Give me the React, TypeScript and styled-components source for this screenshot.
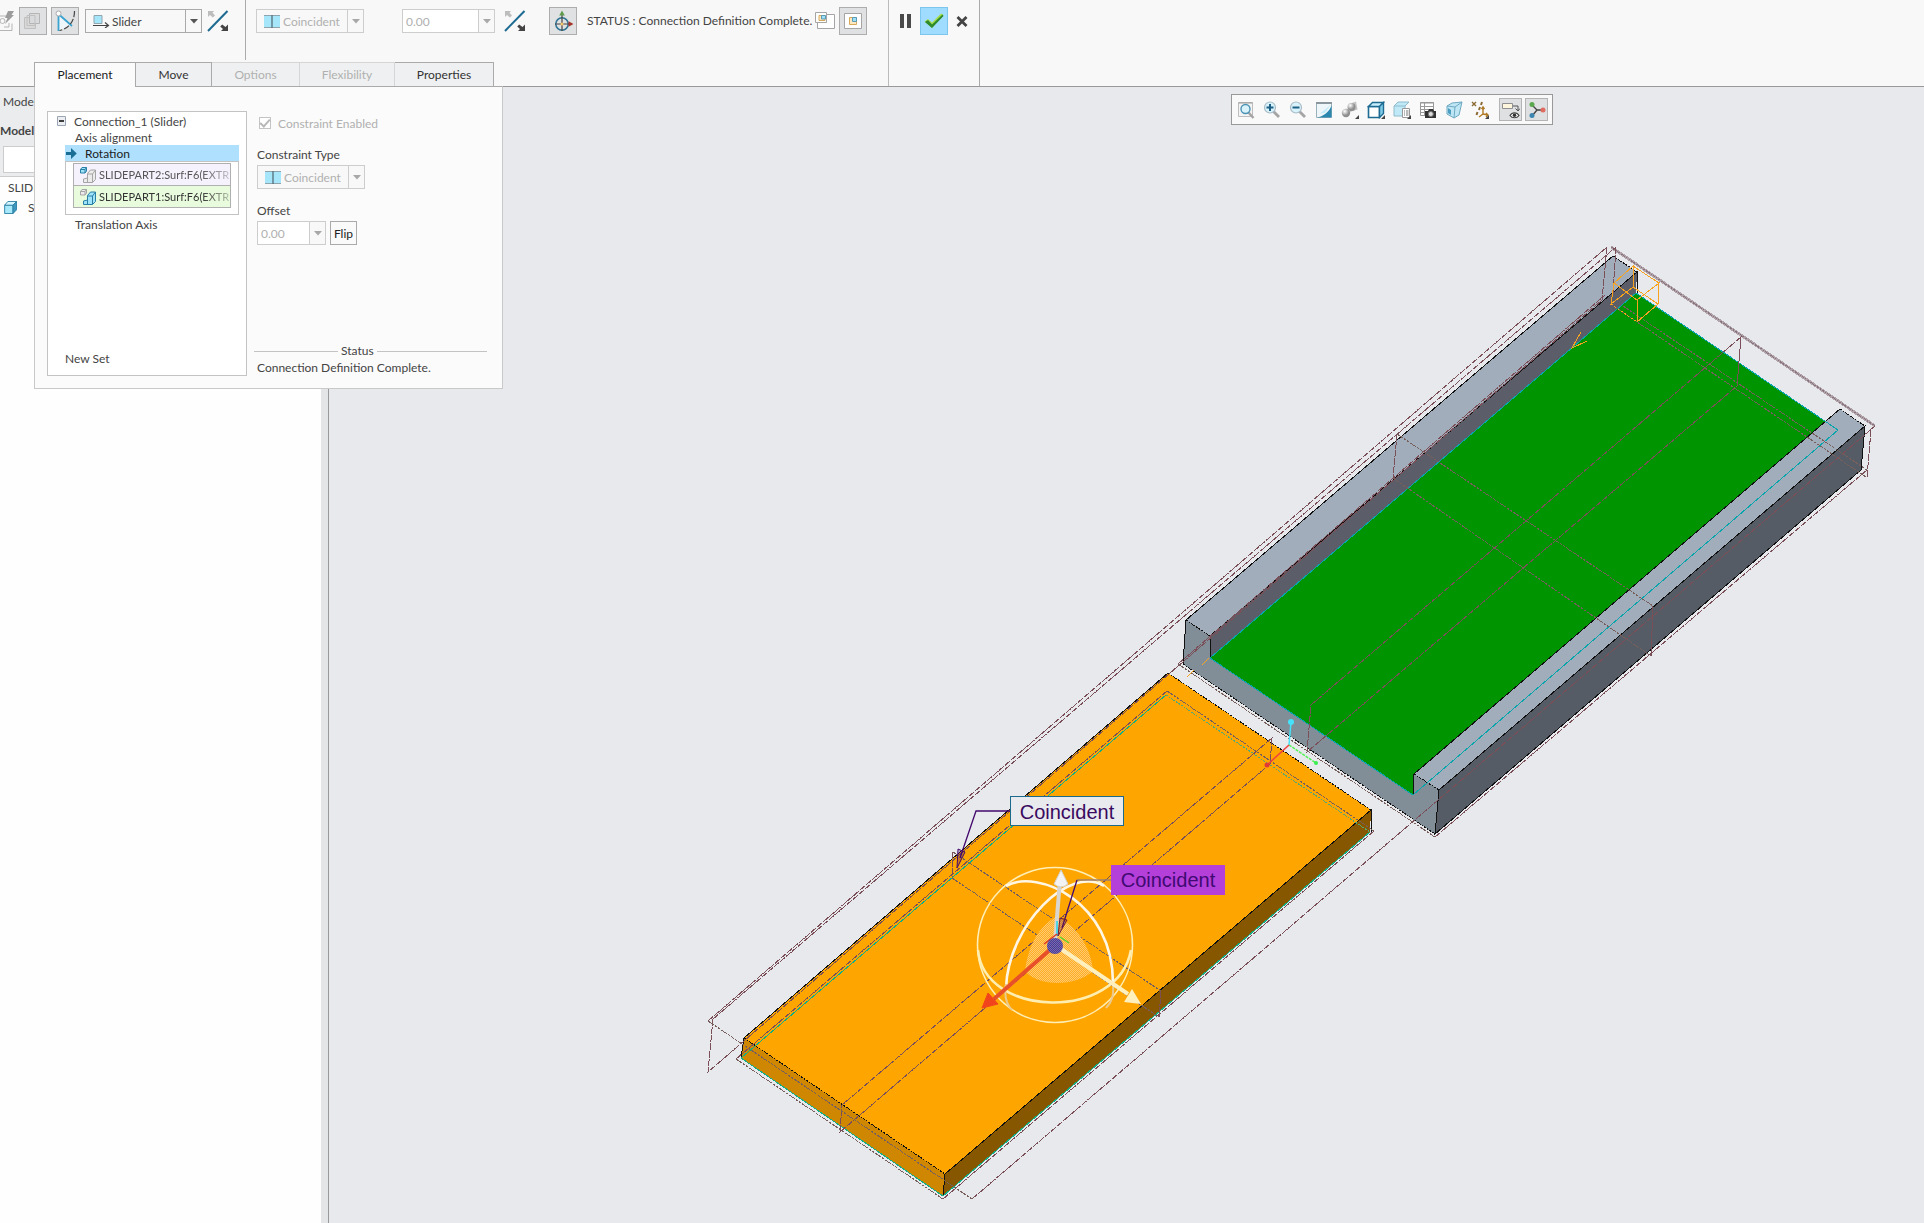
import React from "react";
import styled, { createGlobalStyle, css } from "styled-components";

const GlobalStyle = createGlobalStyle`
  * { box-sizing: border-box; }
  body { margin: 0; }
  body, button, input, select {
    font-family: Lato, "Noto Sans", sans-serif;
    font-size: 12px;
    color: #444;
  }
  button { padding: 0; cursor: pointer; }
  svg { display: block; flex: none; }
`;

/* ---------- page frame ---------- */

const Page = styled.div`
  display: flex;
  flex-direction: column;
  min-height: 100vh;
`;

const Ribbon = styled.header`
  position: relative;
  z-index: 2;
  display: flex;
  height: 87px;
  background: #f8f8f8;
  border-bottom: 1px solid #999;
`;

const Dashboard = styled.div`
  position: relative;
  display: flex;
  flex-direction: column;
  justify-content: space-between;
  width: 889px;
  border-right: 1px solid #bbb;
`;

const Controls = styled.div`
  display: flex;
  height: 60px;
`;

const ControlGroup = styled.div<{ $width?: number }>`
  display: flex;
  align-items: flex-start;
  padding-top: 7px;
  width: ${(p) => (p.$width ? `${p.$width}px` : "auto")};
  border-right: ${(p) => (p.$width ? "1px solid #aaa" : "none")};
`;

const Gap = styled.div<{ $size: number }>`
  flex: none;
  width: ${(p) => p.$size}px;
`;

const Body = styled.div`
  display: flex;
  flex: 1;
`;

/* ---------- controls ---------- */

const IconButton = styled.button<{ $on?: boolean }>`
  display: flex;
  align-items: center;
  justify-content: center;
  flex: none;
  width: 28px;
  height: 28px;
  background: ${(p) => (p.$on ? "#e0e1e2" : "transparent")};
  border: 1px solid ${(p) => (p.$on ? "#adadad" : "transparent")};
`;

const AcceptButton = styled(IconButton)`
  background: #9fdcff;
  border-color: #7cc6ee;
`;

const PlainButton = styled.button`
  display: flex;
  align-items: center;
  justify-content: center;
  height: 28px;
  border: 0;
  background: none;
`;

const ComboFrame = styled.label<{ $width: number; $dim?: boolean; $field?: boolean }>`
  display: grid;
  grid-template-columns: 1fr 16px;
  align-items: center;
  width: ${(p) => p.$width}px;
  height: 24px;
  background: ${(p) => (p.$field ? "#fff" : "#f8f8f8")};
  border: 1px solid ${(p) => (p.$dim ? "#cdcdcd" : "#aaa")};
`;

const comboText = css<{ $inset: number }>`
  grid-row: 1;
  width: 100%;
  height: 22px;
  padding: 0 0 0 ${(p) => p.$inset}px;
  border: 0;
  margin: 0;
  background: transparent;
  appearance: none;
  &:disabled { color: #b0b0b0; opacity: 1; }
`;

const ComboSelect = styled.select<{ $inset: number }>`
  ${comboText}
  grid-column: 1 / -1;
`;

const ComboInput = styled.input<{ $inset: number }>`
  ${comboText}
  grid-column: 1;
  min-width: 0;
`;

const ComboIcon = styled.span`
  grid-row: 1;
  grid-column: 1;
  padding-left: 7px;
  pointer-events: none;
`;

const ComboArrow = styled.span<{ $dim?: boolean }>`
  grid-row: 1;
  grid-column: 2;
  display: flex;
  align-items: center;
  justify-content: center;
  height: 22px;
  background: #f8f8f8;
  border-left: 1px solid ${(p) => (p.$dim ? "#cdcdcd" : "#aaa")};
  pointer-events: none;
`;

const ControlSlot = styled.div`
  padding-top: 2px;
`;

const StatusText = styled.output`
  line-height: 28px;
  white-space: nowrap;
`;

/* ---------- tabs ---------- */

const Tabs = styled.div`
  display: flex;
  padding-left: 34px;
`;

const Tab = styled.button<{ $width: number; $active?: boolean }>`
  position: relative;
  z-index: ${(p) => (p.$active ? 1 : "auto")};
  width: ${(p) => p.$width}px;
  height: ${(p) => (p.$active ? 25 : 24)}px;
  margin-bottom: ${(p) => (p.$active ? -1 : 0)}px;
  padding-bottom: ${(p) => (p.$active ? 2 : 0)}px;
  background: ${(p) => (p.$active ? "#fbfbfb" : "#eff0f1")};
  color: ${(p) => (p.$active ? "#1a1a1a" : "#333")};
  border: 1px solid #aaa;
  border-bottom: 0;
  & + & { border-left: 0; }
  &:disabled {
    color: #b0b0b0;
    border-color: #d6d6d6;
  }
  &:disabled:has(+ &:enabled) { border-right-color: #aaa; }
`;

/* ---------- placement panel ---------- */

const Panel = styled.section`
  position: absolute;
  top: 100%;
  left: 34px;
  display: flex;
  gap: 10px;
  width: 469px;
  padding: 24px 15px 12px 12px;
  background: #fbfbfb;
  border: 1px solid #c9c9c9;
  border-top-color: #aaa;
`;

const Tree = styled.div`
  display: flex;
  flex-direction: column;
  width: 200px;
  height: 265px;
  padding: 1px 7px 6px 9px;
  background: #fff;
  border: 1px solid #c3c3c3;
`;

const TreeRow = styled.div<{ $indent?: number }>`
  display: flex;
  align-items: center;
  gap: 8px;
  height: 16px;
  padding-left: ${(p) => p.$indent ?? 0}px;
  white-space: nowrap;
`;

const SelectedRow = styled(TreeRow)`
  margin-left: 8px;
  background: #afe1ff;
  color: #222;
`;

const References = styled.div`
  height: 54px;
  padding: 1px 7px;
  margin: 0 0 1px 8px;
  border: 1px solid #c3c3c3;
`;

const Reference = styled.button<{ $tint: string; $ink: string }>`
  display: flex;
  align-items: center;
  gap: 3px;
  width: 100%;
  height: 23px;
  padding: 0 0 0 6px;
  background: ${(p) => p.$tint};
  color: ${(p) => p.$ink};
  border: 1px solid #b0b0b0;
  font-size: 11px;
  & + & { margin-top: -1px; }
`;

const ReferenceName = styled.span`
  flex: 1;
  text-align: left;
  white-space: nowrap;
  mask-image: linear-gradient(to right, #000 78%, transparent 108%);
`;

const NewSet = styled.button`
  margin: auto 0 0 8px;
  align-self: flex-start;
  height: 22px;
  border: 0;
  background: none;
`;

const Settings = styled.div`
  display: flex;
  flex: 1;
  flex-direction: column;
  align-items: flex-start;
`;

const CheckLabel = styled.label`
  display: flex;
  align-items: center;
  gap: 7px;
  height: 24px;
  padding-left: 2px;
  color: #b0b0b0;
`;

const CheckBox = styled.input`
  appearance: none;
  display: grid;
  place-items: center;
  width: 12px;
  height: 12px;
  margin: 0;
  border: 1px solid #c4c4c4;
  background: #fff;
  &:checked::after {
    content: "";
    width: 8px;
    height: 4px;
    border: solid #b8b8b8;
    border-width: 0 0 2px 2px;
    transform: translateY(-1px) rotate(-48deg);
  }
`;

const FieldTitle = styled.h3<{ $top: number }>`
  margin: ${(p) => p.$top}px 0 0;
  font-size: 12px;
  font-weight: 400;
  line-height: 20px;
`;

const FieldRow = styled.div`
  display: flex;
  gap: 4px;
`;

const FlipButton = styled.button`
  width: 27px;
  height: 24px;
  background: #fafafa;
  border: 1px solid #aaa;
  color: #222;
`;

const StatusBox = styled.div`
  align-self: stretch;
  margin-top: auto;
`;

const StatusTitle = styled.h3`
  display: grid;
  grid-template-columns: 84px auto 1fr;
  align-items: center;
  gap: 3px;
  margin: 0 0 0 -3px;
  font-size: 12px;
  font-weight: 400;
  line-height: 18px;
  &::before, &::after {
    content: "";
    border-top: 1px solid #c3c3c3;
  }
`;

const StatusLine = styled.p`
  margin: 0;
  line-height: 16px;
`;

/* ---------- model tree ---------- */

const Sidebar = styled.aside`
  display: flex;
  flex-direction: column;
  width: 328px;
  flex: none;
  border-right: 7px solid #e4e5e6;
  background: #fefefe;
  overflow: hidden;
`;

const SidebarTop = styled.div`
  display: flex;
  flex-direction: column;
  height: 90px;
  padding: 4px 4px 3px 3px;
  background: #eaecee;
  border-bottom: 1px solid #ccc;
`;

const SidebarTab = styled.span`
  line-height: 22px;
`;

const SidebarTitle = styled.strong`
  margin-left: -3px;
  padding-top: 7px;
  line-height: 22px;
`;

const SearchBox = styled.input`
  height: 27px;
  margin-top: auto;
  border: 1px solid #ccc;
  background: #fff;
`;

const ModelRow = styled.div<{ $indent: number }>`
  display: flex;
  align-items: center;
  gap: 11px;
  height: 20px;
  padding-left: ${(p) => p.$indent}px;
`;

/* ---------- graphics area ---------- */

const Viewport = styled.main`
  position: relative;
  flex: 1;
  min-width: 0;
  background: #e8e9ed;
  border-left: 1px solid #999;
  overflow: hidden;
`;

const Scene = styled.svg`
  position: absolute;
  inset: 0;
  width: 100%;
  height: 100%;
`;

const ViewBar = styled.div`
  position: absolute;
  top: 7px;
  right: 371px;
  display: flex;
  align-items: center;
  gap: 6px;
  height: 31px;
  padding: 0 4px 0 1px;
  background: #f9f9f9;
  border: 1px solid #999;
`;

const ViewGroup = styled.div<{ $gap: number }>`
  display: flex;
  gap: ${(p) => p.$gap}px;
`;

const ViewButton = styled.button<{ $on?: boolean }>`
  display: flex;
  align-items: center;
  justify-content: center;
  width: ${(p) => (p.$on ? 23 : 26)}px;
  height: 23px;
  background: ${(p) => (p.$on ? "#dfe0e2" : "transparent")};
  border: ${(p) => (p.$on ? "1px solid #b4b4b4" : "0")};
`;

const Callout = styled.div<{ $x: number; $y: number; $solid?: boolean }>`
  position: absolute;
  left: ${(p) => p.$x}px;
  top: ${(p) => p.$y}px;
  width: 114px;
  height: 30px;
  font: 20px / 30px "Liberation Sans", Arial, sans-serif;
  text-align: center;
  color: ${(p) => (p.$solid ? "#3f0a72" : "#39095f")};
  background: ${(p) => (p.$solid ? "#b43fd9" : "#e9eaee")};
  border: ${(p) => (p.$solid ? "0" : "1px solid #1b6a8c")};
`;

/* ---------- icons ---------- */

const Arrow = ({ dim }: { dim?: boolean }) => (
  <svg width="8" height="5" viewBox="0 0 8 5">
    <path d="M0 0h8L4 4.6z" fill={dim ? "#a8a8a8" : "#555"} />
  </svg>
);

const CoincidentIcon = () => (
  <svg width="16" height="13" viewBox="0 0 16 13">
    <path d="M0 .5h16v12H0z" fill="#a5e6fa" />
    <path d="M0 .5h16M0 12.5h16" stroke="#8fa3ad" />
    <path d="M8 0v13" stroke="#5c7480" strokeWidth="1.4" />
  </svg>
);

const SliderIcon = () => (
  <svg width="17" height="13" viewBox="0 0 17 13">
    <path d="M1 .5h8v8H1z" fill="#a5e6fa" stroke="#90a4ae" />
    <path d="M0 10.5h15M12 7.5l3.5 3-3.5 2.5" fill="none" stroke="#444" strokeWidth="1.2" />
  </svg>
);

const ReverseIcon = () => (
  <svg width="22" height="22" viewBox="0 0 22 22">
    <path d="M1 21L20.500 1" stroke="#1d6b92" strokeWidth="2" />
    <path d="M1 1h6L5.500 2.700 8 5.500 5.800 7.500 3 5 1 7z" fill="#bdbdbd" />
    <path d="M21 21h-7l2-2-2.800-2.500 2-2L18.500 17l2.500-2.500z" fill="#444" />
  </svg>
);

const InterfaceIcon = () => (
  <svg width="15" height="22" viewBox="0 0 15 22">
    <path d="M0 6h9M0 20.500h12v-7" fill="none" stroke="#b5b5b5" />
    <circle cx="2.500" cy="11" r="2.500" fill="none" stroke="#b5b5b5" />
    <path d="M4 17h5v-4" fill="none" stroke="#b5b5b5" />
    <path d="M8 1h6l-2.500 4H14L5 14l2.500-6H5z" fill="#9c9c9c" />
  </svg>
);

const ManualIcon = () => (
  <svg width="20" height="20" viewBox="0 0 20 20">
    <path d="M1.500 6.500v11h11v-11z" fill="#d8d8d8" stroke="#c0c0c0" />
    <path d="M6.500 2.500v10h10v-10z" fill="#d9dadb" stroke="#b5b5b5" />
    <path d="M4 4.500h8v10H4z" fill="none" stroke="#c0c0c0" />
  </svg>
);

const MechanismIcon = () => (
  <svg width="22" height="22" viewBox="0 0 22 22">
    <path d="M4.500 4v16.500L18.500 15z" fill="#eef6fa" />
    <path d="M4.500 5v16M5 4.500L18 16" stroke="#3ba3cf" strokeWidth="1.800" />
    <path d="M20.500 1c0 11-6 17.500-15 19.500" fill="none" stroke="#444" strokeWidth="1.200" strokeDasharray="6 2" />
    <circle cx="4.500" cy="3.500" r="2.500" fill="#fff" stroke="#aaa" />
  </svg>
);

const DraggerIcon = () => (
  <svg width="22" height="22" viewBox="0 0 22 22">
    <circle cx="10" cy="14" r="6.200" fill="none" stroke="#2e7394" strokeWidth="1.500" />
    <path d="M10 5v16M3 14h14" stroke="#444" strokeWidth="1.200" />
    <path d="M10 .5l2.800 5H7.200z" fill="#5d9a4c" />
    <path d="M21.500 14l-5-2.800v5.600z" fill="#a4342c" />
    <circle cx="10" cy="14" r="1.500" fill="#f7c56a" />
  </svg>
);

const SeparateWindowIcon = () => (
  <svg width="20" height="18" viewBox="0 0 20 18">
    <path d="M2.500 2.500h17v14h-17z" fill="#fff" stroke="#a5a5a5" />
    <path d="M.5.5h11v10H.5z" fill="#fff" stroke="#a5a5a5" />
    <path d="M4 3.500h6v5H4z" fill="#fde9c0" stroke="#d9a95b" />
    <path d="M6.500 3.500h4v3.500h-4z" fill="#9fe0f7" stroke="#5a9ab5" />
  </svg>
);

const AssemblyWindowIcon = () => (
  <svg width="18" height="16" viewBox="0 0 18 16">
    <path d="M.5.500h17v15H.500z" fill="#fff" stroke="#a5a5a5" />
    <path d="M5.500 4.500h7v7h-7z" fill="#fde9c0" stroke="#d9a95b" />
    <path d="M8.500 4.500h4v4h-4z" fill="#9fe0f7" stroke="#5a9ab5" />
  </svg>
);

const PauseIcon = () => (
  <svg width="12" height="14" viewBox="0 0 12 14">
    <path d="M0 0h4v14H0zM7 0h4v14H7z" fill="#4a4a4a" />
  </svg>
);

const CheckIcon = () => (
  <svg width="20" height="16" viewBox="0 0 20 16">
    <path d="M.5 8.500L4 6l4 3.500L17 .5l2.500 1.500L8 15z" fill="#a6dd4c" />
    <path d="M1 9l3-2 4 4.500L18.500 1.500 19.500 3 8 15z" fill="#2d8a2f" />
  </svg>
);

const CloseIcon = () => (
  <svg width="12" height="11" viewBox="0 0 12 11">
    <path d="M1.500 1l9 9M10.500 1l-9 9" stroke="#444" strokeWidth="2.800" />
  </svg>
);

const CubeIcon = () => (
  <svg width="13" height="13" viewBox="0 0 14 14">
    <path d="M.7 4.500h9v9h-9z" fill="#a8e8fb" stroke="#2a7fa5" />
    <path d="M.7 4.500l3.500-4h9.300l-3.800 4z" fill="#d5f5ff" stroke="#2a7fa5" />
    <path d="M9.700 13.500l3.800-4V.5l-3.800 4z" fill="#3f97bf" stroke="#2a7fa5" />
  </svg>
);

const SurfaceIcon = ({ lowerActive }: { lowerActive?: boolean }) => {
  const on = { fill: "#9fe3fa", stroke: "#2a7fa5" };
  const off = { fill: "#ececec", stroke: "#a5a5a5" };
  const upper = lowerActive ? off : on;
  const lower = lowerActive ? on : off;
  return (
    <svg width="16" height="16" viewBox="0 0 16 16">
      <path d="M.5 2.500L2 .5h4.500v3.500L5 6H.5zM.5 2.500H5V6M5 2.500L6.500.5" {...upper} />
      <path d="M3.500 15.500V12l4-1V6.500l3-3.500h5v9.500l-3 3z" {...lower} />
      <path d="M7.500 15V7h5v8.500M12.500 7l3-4" fill="none" stroke={lower.stroke} />
    </svg>
  );
};

const MinusBox = () => (
  <svg width="9" height="10" viewBox="0 0 9 10">
    <path d="M.5.500h8v9h-8z" fill="#eceef2" stroke="#9aa6b5" />
    <path d="M2 5h5" stroke="#111" strokeWidth="1.600" />
  </svg>
);

const RightArrow = () => (
  <svg width="11" height="11" viewBox="0 0 11 11">
    <path d="M0 4h5V0l5.800 5.500L5 11V7H0z" fill="#1a6e96" />
  </svg>
);

const Lens = ({ mark }: { mark?: string }) => (
  <>
    <path d="M10.500 10.500l5.500 5.500" stroke="#a5a5a5" strokeWidth="2.800" />
    <circle cx="7" cy="6.500" r="5.500" fill="#d9f3fc" stroke="#a9bcc6" strokeWidth="1.200" />
    {mark && <path d={mark} stroke="#1d5f85" strokeWidth="2" />}
  </>
);

const Corner = () => <path d="M18 14v4h-4z" fill="#444" />;

type ViewIcon = { name: string; art: React.ReactNode };

const viewIcons: ViewIcon[] = [
  {
    name: "Refit",
    art: (
      <>
        <path d="M1.500 1.500h14v14h-14z" fill="#f4f4f4" stroke="#bdbdbd" />
        <path d="M1.500 2h14" stroke="#999" />
        <path d="M11 11l5.500 6" stroke="#a5a5a5" strokeWidth="2.500" />
        <circle cx="8.500" cy="8" r="4.500" fill="#d9f3fc" stroke="#4b93b5" strokeWidth="1.400" />
      </>
    ),
  },
  { name: "Zoom in", art: <Lens mark="M3.500 6.500h7M7 3v7" /> },
  { name: "Zoom out", art: <Lens mark="M3.500 6.500h7" /> },
  {
    name: "Repaint",
    art: (
      <>
        <path d="M1.500 1.500h15v15h-15z" fill="#eef6f9" stroke="#9ab0ba" />
        <path d="M1 2h16" stroke="#8a979e" strokeWidth="2" />
        <path d="M2 16.500c6-1 12-5 14.500-12v12z" fill="#2b87ad" />
        <path d="M5 12.500L15.500 4l-5.500 8z" fill="#c5ecf9" />
      </>
    ),
  },
  {
    name: "Shading",
    art: (
      <>
        <defs>
          <radialGradient id="shade" cx="35%" cy="30%">
            <stop offset="0" stopColor="#fff" />
            <stop offset="1" stopColor="#8f8f8f" />
          </radialGradient>
        </defs>
        <path d="M8 3l7-2.500 1.500 8L9 11z" fill="#c4c4c4" />
        <circle cx="10.500" cy="6" r="4" fill="url(#shade)" />
        <circle cx="5" cy="12" r="4.200" fill="url(#shade)" />
        <Corner />
      </>
    ),
  },
  {
    name: "Display style",
    art: (
      <>
        <path d="M1.500 5.500h11v11h-11z" fill="#fff" stroke="#1d6b92" strokeWidth="1.600" />
        <path d="M1.500 5.500l4-4h11l-4 4z" fill="#c8effb" stroke="#1d6b92" strokeWidth="1.400" />
        <path d="M12.500 16.500l4-4v-11l-4 4z" fill="#7fcbe6" stroke="#1d6b92" strokeWidth="1.400" />
        <Corner />
      </>
    ),
  },
  {
    name: "Saved orientations",
    art: (
      <>
        <path d="M1 5l4-4h11l-4 4v10H1z" fill="#bfe9f7" stroke="#8fbccc" />
        <path d="M1 5h11" stroke="#8fbccc" />
        <path d="M9.500 7.500h7v9h-7z" fill="#fff" stroke="#999" />
        <path d="M11 10h1m1 0h2.500M11 12h1m1 0h2.500M11 14h1m1 0h2.500" stroke="#777" />
        <Corner />
      </>
    ),
  },
  {
    name: "View manager",
    art: (
      <>
        <path d="M1.500 1.500h13v13h-13z" fill="#fff" stroke="#999" />
        <path d="M1 2h14M1 5.500h14M1 8.500h14M1 11.500h14M5.500 2v13" stroke="#999" />
        <path d="M6 10h3l1-2h4l1 2h2v7H6z" fill="#333" />
        <circle cx="11.800" cy="13" r="2.500" fill="#ddd" stroke="#777" />
      </>
    ),
  },
  {
    name: "Perspective",
    art: (
      <>
        <path d="M2 5l5-3 10-1-3 13-5 3-7-4z" fill="#bfe6f4" stroke="#6ea9c2" />
        <path d="M2 5l8 1 7-5M10 6L9 17" fill="none" stroke="#6ea9c2" />
        <path d="M3 7l3 2v5l-3-2z" fill="#4a9cc0" />
      </>
    ),
  },
  {
    name: "Datum display",
    art: (
      <>
        <path d="M1 1l4 4M5 1L1 5" stroke="#8a6a35" strokeWidth="1.400" />
        <path d="M11 1l-1 3M9 6l-1 3M6.500 11l-1 3" stroke="#8a6a35" strokeWidth="2" />
        <path d="M12 6v7l-4 3M12 13l5 1M10.500 8L12 6l1.500 2M15 12l2 2-2 2" fill="none" stroke="#b07a25" strokeWidth="1.400" />
        <Corner />
      </>
    ),
  },
];

const toggleIcons: ViewIcon[] = [
  {
    name: "Annotation display",
    art: (
      <>
        <path d="M.5 2.500h10v5H.500z" fill="#fdf6dd" stroke="#8f8f8f" />
        <path d="M11 5h5v5M13.500 7.500L16 10l2-2.500" fill="none" stroke="#555" />
        <path d="M8 14.500c2-3.500 7-3.500 9 0-2 3-7 3-9 0z" fill="#fff" stroke="#444" strokeWidth="1.200" />
        <circle cx="12.500" cy="14.300" r="1.800" fill="#333" />
      </>
    ),
  },
  {
    name: "Spin center",
    art: (
      <>
        <path d="M4 4l5 5-5 6M9 9h6" fill="none" stroke="#444" strokeWidth="1.400" />
        <circle cx="4" cy="3.500" r="2.500" fill="#5aa84e" />
        <circle cx="15" cy="9" r="2.500" fill="#e06b60" />
        <circle cx="4" cy="14.500" r="2.500" fill="#3a86b0" />
      </>
    ),
  },
];

const ViewButtons = ({ icons, on }: { icons: ViewIcon[]; on?: boolean }) => (
  <ViewGroup $gap={on ? 3 : 0}>
    {icons.map((icon) => (
      <ViewButton key={icon.name} aria-label={icon.name} $on={on}>
        <svg width="18" height="18" viewBox="0 0 18 18">
          {icon.art}
        </svg>
      </ViewButton>
    ))}
  </ViewGroup>
);

/* ---------- reusable combos ---------- */

type ComboProps = {
  label: string;
  width: number;
  value: string;
  icon: React.ReactNode;
  disabled?: boolean;
};

const Combo = ({ label, width, value, icon, disabled }: ComboProps) => (
  <ComboFrame $width={width} $dim={disabled}>
    <ComboSelect $inset={26} aria-label={label} disabled={disabled} defaultValue={value}>
      <option>{value}</option>
    </ComboSelect>
    <ComboIcon>{icon}</ComboIcon>
    <ComboArrow $dim={disabled}>
      <Arrow dim={disabled} />
    </ComboArrow>
  </ComboFrame>
);

const ValueCombo = ({ label, width }: { label: string; width: number }) => (
  <ComboFrame $width={width} $dim $field>
    <ComboInput $inset={3} aria-label={label} disabled defaultValue="0.00" />
    <ComboArrow $dim>
      <Arrow dim />
    </ComboArrow>
  </ComboFrame>
);

/* ---------- 3D scene ---------- */

const planeLines = [
  "M708 1021L1607 247M713 1019L1616 247M713 1019L708 1072L1602 300",
  "M1607 247l-5 53M1616 247l-3 46",
  "M972 1199L1875 426",
  "M1435 837L1867 470",
  "M1178 664L1605 295",
  "M1871 430L1867 477M1741 337L1311 705L1307 752L1737 386zM1741 337l-4 49",
  "M1397 434L1393 478M1653 606L1651 656",
  "M1272 738L1270 764L840 1132L842 1105z",
  "M953 852L952 878M1161 991L1159 1017",
  "M736 1059L1167 691M943 1199L1374 831",
];

const crossLines = [
  "M708 1021L972 1199",
  "M1178 664L1435 837",
  "M1623 306L1867 470M1615 307L1866 477",
  "M1397 434L1653 606M1393 478L1651 656",
  "M736 1059L943 1199M1167 691L1374 831",
  "M953 852L1161 991M952 878L1159 1017",
];

const SceneArt = () => (
  <Scene aria-label="Slider assembly model">
    <defs>
      <pattern id="mesh" width="2" height="2" patternUnits="userSpaceOnUse">
        <path d="M0 0h1v1H0zM1 1h1v1H1z" fill="#fff" opacity=".5" />
      </pattern>
    </defs>
    <g transform="translate(-329 -87)" fill="none">
      <g shapeRendering="crispEdges">
        {/* channel part */}
        <path d="M1210 658L1636 293L1838 430L1413 795z" fill="#009400" />
        <path d="M1186 620L1613 256L1637 272L1210 636z" fill="#a1adbb" />
        <path d="M1210 636L1637 272L1636 293L1210 658z" fill="#5b5e68" />
        <path d="M1186 620L1210 636L1210 658L1413 795L1414 774L1439 790L1435 834L1183 664z" fill="#818d97" />
        <path d="M1414 774L1840 409L1865 426L1439 790z" fill="#a1adbb" />
        <path d="M1439 790L1865 426L1861 470L1435 834z" fill="#555c65" />
        <g stroke="#111">
          <path d="M1186 620L1613 256M1210 636L1637 272V293M1210 636V658M1186 620L1183 664M1414 774L1840 409M1439 790L1865 426L1861 470L1435 834L1439 790M1414 774L1413 795" />
          <path d="M1613 256L1637 272M1186 620L1210 636M1414 774L1439 790M1840 409L1865 426M1183 664L1435 834" strokeDasharray="2 1" />
        </g>
        <path d="M1636 293L1838 430L1413 795L1210 658z" stroke="#08a5ad" />

        {/* sliding plate */}
        <path d="M744 1038L1168 673L1371 810L945 1174z" fill="#ffa500" />
        <path d="M744 1038L945 1174L943 1196L741 1058z" fill="#cf8600" />
        <path d="M945 1174L1371 810L1370 832L943 1196z" fill="#875700" />
        <g stroke="#111">
          <path d="M744 1038L1168 673M945 1174L1371 810V832M744 1038L741 1058M945 1174L943 1196" />
          <path d="M1168 673L1371 810M744 1038L945 1174" strokeDasharray="2 1" />
        </g>
        <path d="M741 1058L1166 695M943 1196L1370 832M741 1058L943 1196" stroke="#12ae85" />
        <path d="M1166 695L1370 832" stroke="#55a970" strokeDasharray="2 1" />

        {/* datum planes */}
        <path d="M1611 247L1875 426" stroke="#b0a3aa" strokeWidth="3" />
        <path d="M1611 247L1875 426" stroke="#8a727c" strokeDasharray="2 1" />
        {planeLines.map((d) => (
          <path key={d} d={d} stroke="#7a4f58" strokeDasharray="7 1" />
        ))}
        {crossLines.map((d) => (
          <path key={d} d={d} stroke="#77605c" strokeDasharray="3 1" />
        ))}

        {/* joint symbol */}
        <g stroke="#f7a320">
          <path d="M1633 266L1614 283L1611 304L1633 287zM1659 283L1658 304L1637 322V300zM1633 266L1659 283M1633 287L1658 304M1614 283L1637 300" />
          <path d="M1611 304L1637 322" strokeDasharray="2 2" />
          <path d="M1581 332L1572 348L1587 341M1209 658l-7 7M1194 670l-7 7" />
        </g>
      </g>

      {/* assembly axes */}
      <path d="M1289 745L1291 722" stroke="#45e3fb" strokeWidth="1.500" />
      <circle cx="1291" cy="722" r="3" fill="#45e3fb" />
      <path d="M1289 745L1316 763" stroke="#55f055" strokeDasharray="3 1" strokeWidth="1.500" />
      <circle cx="1316" cy="763" r="2" fill="#39ee4f" />
      <path d="M1289 745L1267 765" stroke="#f04040" strokeWidth="1.500" />
      <circle cx="1267" cy="765" r="2.500" fill="#e03838" />

      {/* 3D dragger */}
      <path d="M1056 917C1040 925 1028 945 1025 971C1038 987 1076 987 1093 971C1091 948 1077 925 1056 917z" fill="#ffae24" />
      <path d="M1056 917C1040 925 1028 945 1025 971C1038 987 1076 987 1093 971C1091 948 1077 925 1056 917z" fill="url(#mesh)" opacity=".7" />
      <circle cx="1055" cy="945" r="77.500" stroke="#ffeeb5" strokeWidth="1.600" />
      <path d="M978 950C984 1018 1118 1022 1131 950" stroke="#ffeeb0" strokeWidth="2.600" />
      <path d="M1006 886C1038 868 1113 902 1113 983" stroke="#fff6e4" strokeWidth="2.600" />
      <path d="M1104 886C1070 864 1008 925 1006 988" stroke="#fff6e4" strokeWidth="2.600" />
      <path d="M1006 984C1004 996 1006 1004 1012 1010M1113 983C1114 996 1112 1002 1106 1008" stroke="#ecc98c" strokeWidth="2" />
      <path d="M1055 942L1060 880" stroke="#d9d5cf" strokeWidth="4" />
      <path d="M1061 870L1054 884Q1061 890 1068 884z" fill="#f3f3f3" stroke="#d5cfc4" />
      <path d="M1058 947L1128 994" stroke="#fff0bd" strokeWidth="4" />
      <path d="M1141 1004L1124 1002L1132 989z" fill="#fff0bd" />
      <path d="M1052 948L994 999" stroke="#e8502a" strokeWidth="4" />
      <path d="M982 1008L988 993L998 1004z" fill="#f2441c" stroke="#f2441c" />
      <path d="M1057 936V921" stroke="#50d5e5" strokeWidth="2" />
      <path d="M1044 944l13-10" stroke="#e03a20" strokeWidth="1.500" />
      <path d="M1060 937l9 6" stroke="#5ad42e" strokeWidth="1.500" />
      <circle cx="1055" cy="946" r="8" fill="#4a3a94" />
      <circle cx="1055" cy="946" r="8" fill="url(#mesh)" opacity=".5" />

      {/* callout leaders */}
      <path d="M1010 811H976L960 858" stroke="#43096d" strokeWidth="1.300" />
      <path d="M957 868L958 849L965 852z" stroke="#43096d" fill="#43096d" fillOpacity=".3" />
      <path d="M1112 880H1077" stroke="#9b806e" strokeWidth="1.500" />
      <path d="M1077 880L1062 928" stroke="#43096d" strokeWidth="1.300" />
      <path d="M1058 936L1060 918L1067 920z" stroke="#6c1c3d" fill="#6c1c3d" fillOpacity=".3" />
    </g>
  </Scene>
);

/* ---------- application ---------- */

export default function App() {
  return (
    <Page>
      <GlobalStyle />
      <Ribbon>
        <Dashboard>
          <Controls>
            <ControlGroup $width={246}>
              <PlainButton aria-label="Interface">
                <InterfaceIcon />
              </PlainButton>
              <Gap $size={4} />
              <IconButton $on aria-label="Manual placement" disabled>
                <ManualIcon />
              </IconButton>
              <Gap $size={4} />
              <IconButton $on aria-label="Mechanism connection">
                <MechanismIcon />
              </IconButton>
              <Gap $size={6} />
              <ControlSlot>
                <Combo label="Connection type" width={117} value="Slider" icon={<SliderIcon />} />
              </ControlSlot>
              <Gap $size={5} />
              <PlainButton aria-label="Reverse connection">
                <ReverseIcon />
              </PlainButton>
            </ControlGroup>
            <ControlGroup>
              <Gap $size={10} />
              <ControlSlot>
                <Combo label="Constraint" width={108} value="Coincident" icon={<CoincidentIcon />} disabled />
              </ControlSlot>
              <Gap $size={38} />
              <ControlSlot>
                <ValueCombo label="Constraint offset" width={93} />
              </ControlSlot>
              <Gap $size={9} />
              <PlainButton aria-label="Reverse offset">
                <ReverseIcon />
              </PlainButton>
              <Gap $size={23} />
              <IconButton $on aria-label="3D dragger">
                <DraggerIcon />
              </IconButton>
              <Gap $size={10} />
              <StatusText>STATUS : Connection Definition Complete.</StatusText>
              <Gap $size={3} />
              <PlainButton aria-label="Show in separate window">
                <SeparateWindowIcon />
              </PlainButton>
              <Gap $size={4} />
              <IconButton $on aria-label="Show in assembly window">
                <AssemblyWindowIcon />
              </IconButton>
            </ControlGroup>
          </Controls>
          <Tabs role="tablist">
            <Tab role="tab" aria-selected $width={102} $active>
              Placement
            </Tab>
            <Tab role="tab" $width={76}>
              Move
            </Tab>
            <Tab role="tab" $width={88} disabled>
              Options
            </Tab>
            <Tab role="tab" $width={95} disabled>
              Flexibility
            </Tab>
            <Tab role="tab" $width={99}>
              Properties
            </Tab>
          </Tabs>

          <Panel aria-label="Placement">
            <Tree>
              <TreeRow>
                <MinusBox />
                Connection_1 (Slider)
              </TreeRow>
              <TreeRow $indent={18}>Axis alignment</TreeRow>
              <SelectedRow $indent={1}>
                <RightArrow />
                Rotation
              </SelectedRow>
              <References>
                <Reference $tint="#f5f1fd" $ink="#555">
                  <SurfaceIcon />
                  <ReferenceName>SLIDEPART2:Surf:F6(EXTR</ReferenceName>
                </Reference>
                <Reference $tint="#e8fbdc" $ink="#333">
                  <SurfaceIcon lowerActive />
                  <ReferenceName>SLIDEPART1:Surf:F6(EXTR</ReferenceName>
                </Reference>
              </References>
              <TreeRow $indent={18}>Translation Axis</TreeRow>
              <NewSet>New Set</NewSet>
            </Tree>
            <Settings>
              <CheckLabel>
                <CheckBox type="checkbox" checked disabled readOnly />
                Constraint Enabled
              </CheckLabel>
              <FieldTitle $top={10}>Constraint Type</FieldTitle>
              <Combo label="Constraint type" width={108} value="Coincident" icon={<CoincidentIcon />} disabled />
              <FieldTitle $top={12}>Offset</FieldTitle>
              <FieldRow>
                <ValueCombo label="Offset" width={69} />
                <FlipButton>Flip</FlipButton>
              </FieldRow>
              <StatusBox>
                <StatusTitle>Status</StatusTitle>
                <StatusLine>Connection Definition Complete.</StatusLine>
              </StatusBox>
            </Settings>
          </Panel>
        </Dashboard>
        <ControlGroup $width={91}>
          <Gap $size={11} />
          <PlainButton aria-label="Pause">
            <PauseIcon />
          </PlainButton>
          <Gap $size={8} />
          <AcceptButton aria-label="Accept">
            <CheckIcon />
          </AcceptButton>
          <Gap $size={8} />
          <PlainButton aria-label="Cancel">
            <CloseIcon />
          </PlainButton>
        </ControlGroup>
      </Ribbon>

      <Body>
        <Sidebar>
          <SidebarTop>
            <SidebarTab>Mode</SidebarTab>
            <SidebarTitle>Model</SidebarTitle>
            <SearchBox aria-label="Search model tree" />
          </SidebarTop>
          <ModelRow $indent={8}>SLIDE</ModelRow>
          <ModelRow $indent={4}>
            <CubeIcon />S
          </ModelRow>
        </Sidebar>
        <Viewport>
          <SceneArt />
          <ViewBar role="toolbar" aria-label="View">
            <ViewButtons icons={viewIcons} />
            <ViewButtons icons={toggleIcons} on />
          </ViewBar>
          <Callout $x={681} $y={709}>
            Coincident
          </Callout>
          <Callout $x={782} $y={778} $solid>
            Coincident
          </Callout>
        </Viewport>
      </Body>
    </Page>
  );
}
